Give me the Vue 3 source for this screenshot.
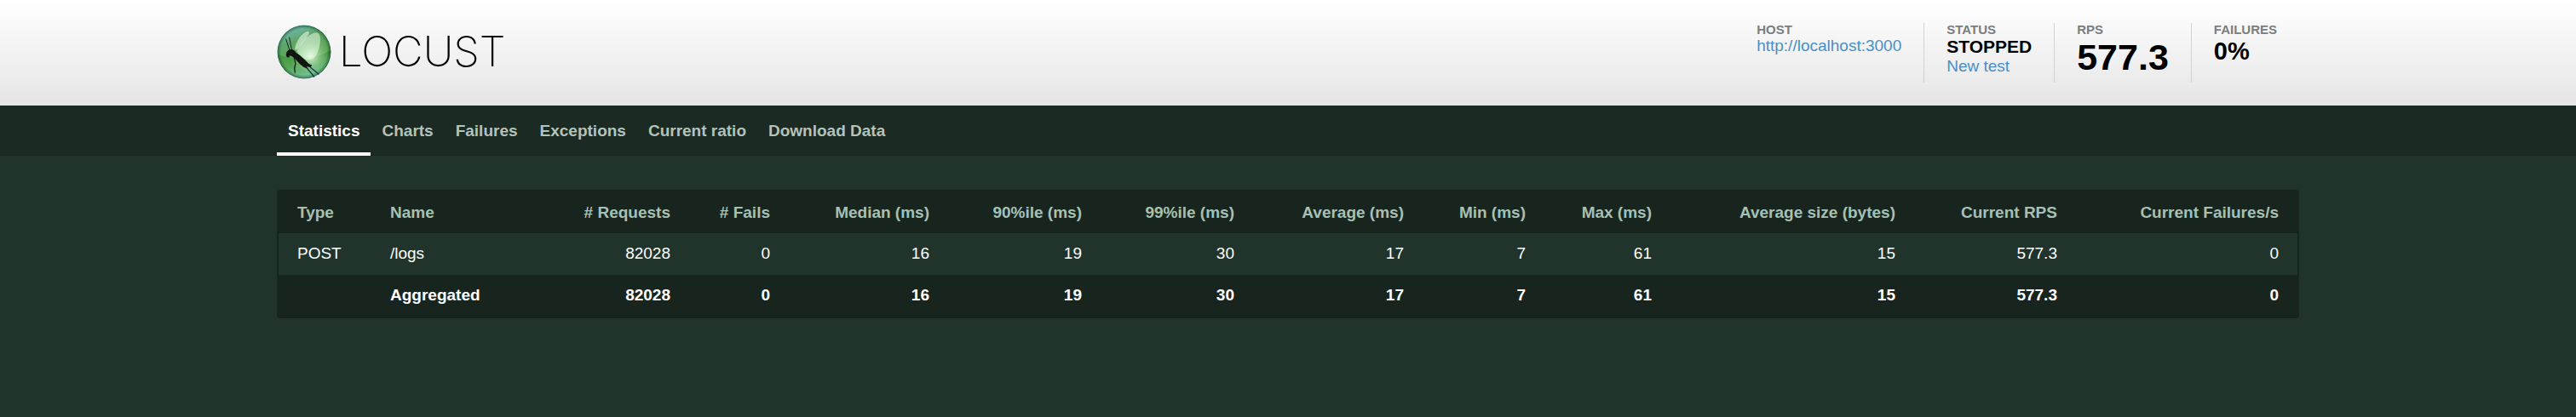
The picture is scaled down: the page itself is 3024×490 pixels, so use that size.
<script setup>
const tabs = ['Statistics', 'Charts', 'Failures', 'Exceptions', 'Current ratio', 'Download Data']

const columns = [
  { label: 'Type', weight: 109, text: true },
  { label: 'Name', weight: 194, text: true },
  { label: '# Requests', weight: 179 },
  { label: '# Fails', weight: 117 },
  { label: 'Median (ms)', weight: 187 },
  { label: '90%ile (ms)', weight: 179 },
  { label: '99%ile (ms)', weight: 179 },
  { label: 'Average (ms)', weight: 199 },
  { label: 'Min (ms)', weight: 143 },
  { label: 'Max (ms)', weight: 148 },
  { label: 'Average size (bytes)', weight: 286 },
  { label: 'Current RPS', weight: 190 },
  { label: 'Current Failures/s', weight: 260 },
]
const totalWeight = columns.reduce((sum, c) => sum + c.weight, 0)

const rows = [
  ['POST', '/logs', '82028', '0', '16', '19', '30', '17', '7', '61', '15', '577.3', '0'],
  ['', 'Aggregated', '82028', '0', '16', '19', '30', '17', '7', '61', '15', '577.3', '0'],
]
</script>

<template>
  <div class="page">
    <header class="top">
      <a class="brand" href="#" aria-label="Locust">
        <svg class="globe" viewBox="15 20 192 192" aria-hidden="true">
          <defs>
            <linearGradient id="sky" x1="0.2" y1="0" x2="0.6" y2="1">
              <stop offset="0" stop-color="#74bfc0" />
              <stop offset="0.3" stop-color="#5fa568" />
              <stop offset="0.65" stop-color="#58a350" />
              <stop offset="1" stop-color="#63b58f" />
            </linearGradient>
            <radialGradient id="glow" cx="0.62" cy="0.58" r="0.4">
              <stop offset="0" stop-color="#f2fff0" stop-opacity="0.9" />
              <stop offset="0.4" stop-color="#c4ecbe" stop-opacity="0.5" />
              <stop offset="1" stop-color="#7cc174" stop-opacity="0" />
            </radialGradient>
            <linearGradient id="ground" x1="0" y1="0" x2="0" y2="1">
              <stop offset="0" stop-color="#1f6d1f" stop-opacity="0.75" />
              <stop offset="0.5" stop-color="#4aa041" stop-opacity="0.35" />
              <stop offset="1" stop-color="#8fdcc8" stop-opacity="0.6" />
            </linearGradient>
            <radialGradient id="rim" cx="0.5" cy="0.5" r="0.5">
              <stop offset="0.86" stop-color="#0b3b1c" stop-opacity="0" />
              <stop offset="1" stop-color="#0b3b1c" stop-opacity="0.5" />
            </radialGradient>
            <clipPath id="ball"><circle cx="111" cy="116" r="94" /></clipPath>
          </defs>
          <g clip-path="url(#ball)">
            <circle cx="111" cy="116" r="94" fill="url(#sky)" />
            <path d="M10 120Q50 142 110 139Q170 136 212 104V215H10Z" fill="url(#ground)" />
            <circle cx="111" cy="116" r="94" fill="url(#glow)" />
            <circle cx="111" cy="116" r="94" fill="url(#rim)" />
          </g>
          <circle cx="111" cy="116" r="93" fill="none" stroke="#236a50" stroke-width="2" />
          <path d="M78 107C82 82 98 52 122 44C131 42 130 51 124 60C112 78 97 94 86 109Z" fill="#e4f8e4" opacity="0.6" />
          <path d="M86 113C100 82 127 51 154 48C169 48 171 76 164 101C158 127 145 145 126 144C109 142 94 130 86 113Z" fill="#e8fbe6" opacity="0.55" />
          <g fill="none" stroke="#17261f" stroke-linecap="round">
            <path d="M47 71Q53 89 59 107M59 65Q63 86 67 107" stroke-width="3" />
            <path d="M76 138L81 157L77 173L79 188" stroke-width="4" />
            <path d="M110 160L146 203" stroke="#16354a" stroke-width="4" />
            <path d="M121 160L162 194" stroke="#16354a" stroke-width="4" />
          </g>
          <path d="M50 115L58 108L69 107L78 112L83 119L96 128L112 142L128 158L139 163L134 169L120 168L125 175L110 170L96 159L85 147L76 138L67 131L60 129L58 136L50 134L47 127Z" fill="#101511" />
        </svg>
        <span class="wordmark">LOCUST</span>
      </a>
      <div class="boxes">
        <div class="box">
          <div class="label">HOST</div>
          <a class="link" href="http://localhost:3000">http://localhost:3000</a>
        </div>
        <div class="box">
          <div class="label">STATUS</div>
          <div class="status">STOPPED</div>
          <a class="link" href="#new">New test</a>
        </div>
        <div class="box">
          <div class="label">RPS</div>
          <div class="rps">577.3</div>
        </div>
        <div class="box">
          <div class="label">FAILURES</div>
          <div class="ratio">0%</div>
        </div>
      </div>
    </header>

    <nav class="menu">
      <a v-for="(tab, i) in tabs" :key="tab" href="#" class="tab" :class="{ active: i === 0 }">{{ tab }}</a>
    </nav>

    <main class="content">
      <div class="frame">
        <table class="stats">
          <colgroup>
            <col v-for="c in columns" :key="c.label" :style="{ width: (c.weight / totalWeight) * 100 + '%' }" />
          </colgroup>
          <thead>
            <tr>
              <th v-for="c in columns" :key="c.label" scope="col" :class="{ text: c.text }">{{ c.label }}</th>
            </tr>
          </thead>
          <tbody>
            <tr v-for="(row, r) in rows" :key="r" :class="{ total: r === rows.length - 1 }">
              <td v-for="(cell, i) in row" :key="i" :class="{ text: columns[i].text }">{{ cell }}</td>
            </tr>
          </tbody>
        </table>
      </div>
    </main>
  </div>
</template>

<style>
body {
  margin: 0;
  background: #20342c;
}
</style>

<style scoped>
.page {
  --gutter: 325px;
  font-family: "Liberation Sans", Arial, sans-serif;
  font-size: 19px;
  line-height: 22px;
  color: #fff;
}
a {
  text-decoration: none;
}
.top {
  display: flex;
  justify-content: space-between;
  align-items: flex-start;
  padding: 27px var(--gutter);
  background: linear-gradient(#fff, #e5e5e5);
}
.brand {
  display: flex;
  align-items: center;
  gap: 9px;
  height: 68px;
  color: #000;
}
.globe {
  width: 64px;
  height: 64px;
}
.wordmark {
  font-family: Inter, sans-serif;
  font-size: 49px;
  font-weight: 200;
  line-height: 64px;
}
.boxes {
  display: flex;
}
.box {
  min-height: 70px;
  padding: 0 26px;
}
.box + .box {
  border-left: 1px solid #d2d2d2;
}
.label {
  font-size: 15px;
  font-weight: bold;
  line-height: 16px;
  color: #7d7d7d;
}
.link {
  display: block;
  color: #4a8fc6;
}
.status {
  font-size: 21px;
  font-weight: bold;
  line-height: 24px;
  color: #000;
}
.rps {
  font-size: 43px;
  font-weight: bold;
  line-height: 48px;
  color: #000;
}
.ratio {
  font-size: 29px;
  font-weight: bold;
  line-height: 34px;
  color: #000;
}
.menu {
  display: flex;
  padding: 0 var(--gutter);
  background: #1b2a23;
}
.tab {
  padding: 19px 13px 14px;
  border-bottom: 4px solid transparent;
  font-weight: bold;
  color: #b3c3bc;
}
.tab.active {
  border-color: #fff;
  color: #fff;
}
.content {
  padding: 40px var(--gutter);
}
.frame {
  padding: 2px;
  border-radius: 4px;
  background: #18251f;
}
.stats {
  width: 100%;
  table-layout: fixed;
  border-collapse: collapse;
}
th,
td {
  padding: 13px 22px 14px;
  text-align: right;
  white-space: nowrap;
}
th {
  padding: 14px 22px 13px;
  color: #a6c0b4;
}
.text {
  text-align: left;
}
tbody tr {
  background: #20342c;
}
tbody .total {
  background: #18251f;
  font-weight: bold;
}
</style>
